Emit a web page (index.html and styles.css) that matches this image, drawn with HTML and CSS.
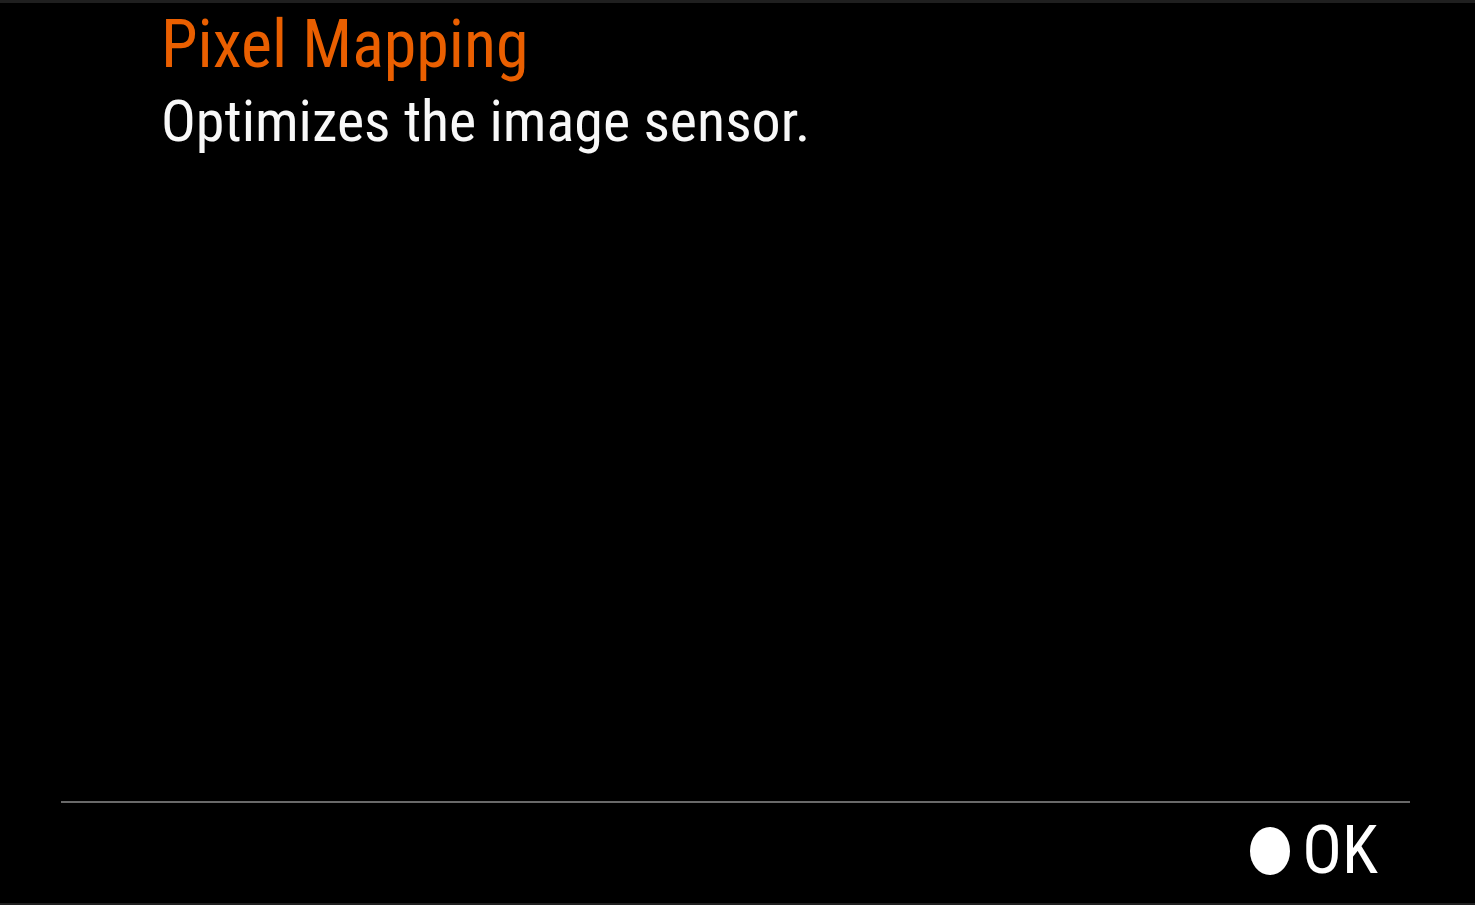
FILE: index.html
```html
<!DOCTYPE html>
<html lang="en">
<head>
<meta charset="utf-8">
<title>Pixel Mapping</title>
<link rel="stylesheet" href="styles.css">
</head>
<body>
<main class="screen">
  <header class="intro">
    <h1 class="title">Pixel Mapping</h1>
    <p class="description">Optimizes the image sensor.</p>
  </header>
  <footer class="actions">
    <button class="confirm" type="button">
      <svg class="confirm-dot" viewBox="0 0 40 48" aria-hidden="true"><ellipse cx="20" cy="24" rx="20" ry="24"/></svg>
      <span>OK</span>
    </button>
  </footer>
</main>
</body>
</html>
```
FILE: styles.css
```css
* { box-sizing: border-box; }
body { margin: 0; background: #000; }
.screen {
  display: flex;
  flex-direction: column;
  min-height: 100vh;
  border-top: 3px solid #1f1f1f;
  border-bottom: 2px solid #1f1f1f;
  color: #fff;
  font-family: "Roboto Condensed", "Roboto", sans-serif;
}
.intro { padding: 4px 64px 0 161px; }
.title, .description { margin: 0; font-weight: 400; line-height: 76px; }
.title { color: #ea5f00; font-size: 66px; }
.description { color: #f8f8f8; font-size: 58px; }
.actions {
  display: flex;
  justify-content: flex-end;
  margin: auto 65px 0 61px;
  padding: 8px 32px 12px 0;
  border-top: 2px solid #696969;
}
.confirm {
  display: flex;
  align-items: center;
  gap: 12px;
  padding: 0;
  border: 0;
  background: none;
  color: inherit;
  font-family: inherit;
  font-size: 66px;
  line-height: 80px;
}
.confirm-dot { width: 40px; height: 48px; fill: #fff; }
```
